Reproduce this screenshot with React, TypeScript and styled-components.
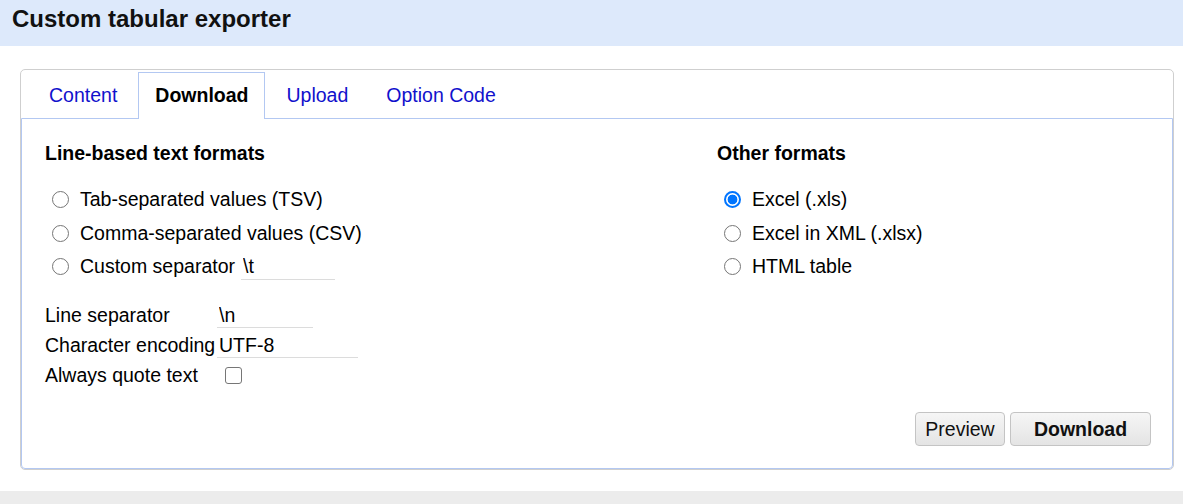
import React from "react";
import styled, { createGlobalStyle } from "styled-components";

const GlobalStyle = createGlobalStyle`
  html, body { margin: 0; padding: 0; background: #ffffff; }
  body { font-family: "Liberation Sans", Arial, sans-serif; color: #000; }
  * { box-sizing: border-box; }
`;

const Page = styled.div`
  display: flex;
  flex-direction: column;
  min-height: 504px;
`;

const Header = styled.header`
  height: 46px;
  background: #dde9fb;
  padding: 5px 0 0 12px;
`;

const Title = styled.h1`
  margin: 0;
  font-size: 24px;
  line-height: 28px;
  font-weight: bold;
  color: #111;
`;

const Main = styled.main`
  padding: 23px 9px 0 20px;
`;

const Frame = styled.div`
  height: 401px;
  border: 1px solid #cfcfcf;
  border-radius: 5px;
  display: flex;
  flex-direction: column;
`;

const TabBar = styled.div`
  display: flex;
  height: 48px;
  padding: 2px 0 0 11px;
`;

const Tab = styled.div<{ $active?: boolean }>`
  position: relative;
  z-index: 1;
  height: 47px;
  margin-right: 4px;
  padding: 0 16px;
  border: 1px solid ${(p) => (p.$active ? "#b3c8f2" : "transparent")};
  border-bottom: none;
  background: ${(p) => (p.$active ? "#fff" : "transparent")};
  font-size: 19.5px;
  line-height: 45px;
  font-weight: ${(p) => (p.$active ? "bold" : "normal")};
  color: ${(p) => (p.$active ? "#000" : "#1111cc")};
  white-space: nowrap;
`;

const Panel = styled.div`
  flex: 1;
  display: flex;
  flex-direction: column;
  border: 1px solid #b3c8f2;
  border-radius: 0 0 4px 4px;
  padding: 23px 21px 22px 23px;
  font-size: 19.5px;
`;

const Columns = styled.div`
  display: grid;
  grid-template-columns: 672px 1fr;
`;

const Column = styled.div`
  display: flex;
  flex-direction: column;
`;

const Heading = styled.h2`
  margin: 0 0 19px;
  font-size: 19.5px;
  line-height: 22px;
  font-weight: bold;
`;

const OptionRow = styled.label`
  display: flex;
  align-items: center;
  height: 33.5px;
  white-space: nowrap;
`;

const Radio = styled.input.attrs({ type: "radio" })`
  appearance: none;
  -webkit-appearance: none;
  flex: none;
  width: 17px;
  height: 17px;
  margin: 0 11px 0 7px;
  border: 1px solid #767676;
  border-radius: 50%;
  background: #fff;
  &:checked {
    border: 2px solid #0075ff;
    background: radial-gradient(circle, #0075ff 0 4.6px, #fff 5.2px);
  }
`;

const LineInput = styled.input<{ $w: number }>`
  width: ${(p) => p.$w}px;
  height: 26px;
  margin: 0;
  padding: 0 2px;
  border: none;
  border-bottom: 1px solid #dcdcdc;
  outline: none;
  font-family: inherit;
  font-size: 19.5px;
  color: #000;
  background: transparent;
`;

const InlineInput = styled(LineInput)`
  margin-left: 6px;
`;

const Settings = styled.div`
  display: grid;
  grid-template-columns: 172px auto;
  grid-auto-rows: 30px;
  align-items: center;
  margin-top: 17px;
  & > :nth-last-child(-n + 2) {
    height: 33px;
    display: flex;
    align-items: center;
  }
`;

const SettingLabel = styled.span`
  white-space: nowrap;
`;

const SettingInput = styled(LineInput)`
  height: 24px;
`;

const Checkbox = styled.input.attrs({ type: "checkbox" })`
  appearance: none;
  -webkit-appearance: none;
  width: 17px;
  height: 17px;
  margin: 0 0 0 8px;
  border: 1px solid #767676;
  border-radius: 3px;
  background: #fff;
`;

const Actions = styled.div`
  margin-top: auto;
  display: flex;
  justify-content: flex-end;
  gap: 5px;
`;

const Button = styled.button<{ $primary?: boolean; $w: number }>`
  width: ${(p) => p.$w}px;
  height: 34px;
  padding: 0;
  border: 1px solid #c4c4c4;
  border-radius: 4px;
  background: linear-gradient(#f6f6f6, #e4e4e4);
  font-family: inherit;
  font-size: 19.5px;
  font-weight: ${(p) => (p.$primary ? "bold" : "normal")};
  color: #111;
`;

const BottomBand = styled.div`
  margin-top: 21px;
  flex: 1;
  min-height: 13px;
  background: #ececec;
`;

export default function App() {
  return (
    <Page>
      <GlobalStyle />
      <Header>
        <Title>Custom tabular exporter</Title>
      </Header>
      <Main>
        <Frame>
          <TabBar>
            <Tab>Content</Tab>
            <Tab $active>Download</Tab>
            <Tab>Upload</Tab>
            <Tab>Option Code</Tab>
          </TabBar>
          <Panel>
            <Columns>
              <Column>
                <Heading>Line-based text formats</Heading>
                <OptionRow>
                  <Radio name="fmt" />
                  Tab-separated values (TSV)
                </OptionRow>
                <OptionRow>
                  <Radio name="fmt" />
                  Comma-separated values (CSV)
                </OptionRow>
                <OptionRow>
                  <Radio name="fmt" />
                  Custom separator
                  <InlineInput $w={94} defaultValue="\t" />
                </OptionRow>
                <Settings>
                  <SettingLabel>Line separator</SettingLabel>
                  <SettingInput $w={96} defaultValue="\n" />
                  <SettingLabel>Character encoding</SettingLabel>
                  <SettingInput $w={141} defaultValue="UTF-8" />
                  <SettingLabel>Always quote text</SettingLabel>
                  <span>
                    <Checkbox />
                  </span>
                </Settings>
              </Column>
              <Column>
                <Heading>Other formats</Heading>
                <OptionRow>
                  <Radio name="fmt" defaultChecked />
                  Excel (.xls)
                </OptionRow>
                <OptionRow>
                  <Radio name="fmt" />
                  Excel in XML (.xlsx)
                </OptionRow>
                <OptionRow>
                  <Radio name="fmt" />
                  HTML table
                </OptionRow>
              </Column>
            </Columns>
            <Actions>
              <Button $w={90}>Preview</Button>
              <Button $w={141} $primary>
                Download
              </Button>
            </Actions>
          </Panel>
        </Frame>
      </Main>
      <BottomBand />
    </Page>
  );
}
